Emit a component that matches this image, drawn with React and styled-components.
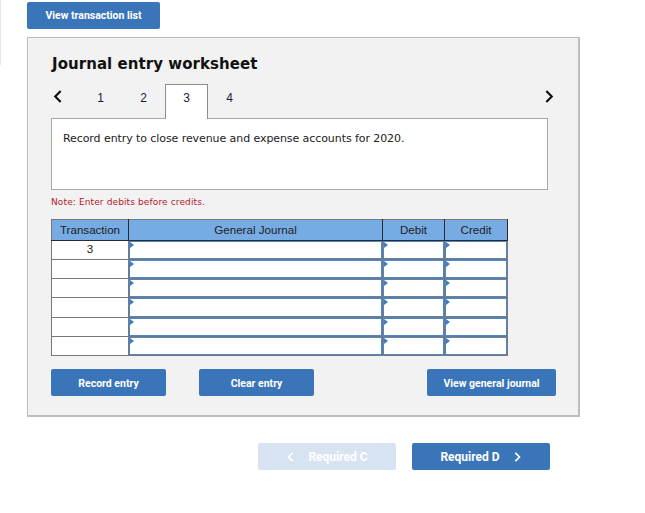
import React from "react";
import styled, { createGlobalStyle } from "styled-components";

const Global = createGlobalStyle`
  html, body { margin: 0; padding: 0; background: #fff; }
  body { font-family: "Liberation Sans", Arial, sans-serif; }
`;
const Page = styled.div`
  position: relative;
  width: 645px;
  height: 513px;
  padding: 2px 0 0 27px;
  box-sizing: border-box;
  overflow: hidden;
`;
const EdgeLine = styled.div`
  position: absolute;
  left: 0;
  top: 0;
  width: 1px;
  height: 65px;
  background: #e6e6e6;
`;
const Button = styled.button`
  display: flex;
  align-items: center;
  justify-content: center;
  gap: ${(p) => p.$gap || 0}px;
  width: ${(p) => p.$w}px;
  height: 27px;
  padding: ${(p) => p.$pt || 0}px 0 0;
  border: 0;
  border-radius: 2px;
  background: ${(p) => (p.$disabled ? "#d7e3f1" : "#3a75b9")};
  color: #fff;
  font-family: Roboto, sans-serif;
  font-weight: 700;
  font-size: ${(p) => p.$fs || 10.5}px;
`;
const Panel = styled.section`
  margin-top: 8px;
  width: 553px;
  height: 380px;
  box-sizing: border-box;
  border: 1px solid #bdbdbd;
  border-width: 1px 2px 2px 1px;
  background: #f2f2f2;
  padding: 16px 31px 0 23px;
`;
const Title = styled.h2`
  margin: 0 0 0 1px;
  font-family: "DejaVu Sans", Verdana, sans-serif;
  font-size: 15px;
  font-weight: 700;
  letter-spacing: 0.05px;
  line-height: 20px;
  color: #111;
`;
const TabRow = styled.div`
  display: flex;
  align-items: flex-end;
  height: 34px;
  margin: 10px -8px 0 0;
  position: relative;
  z-index: 1;
`;
const Arrow = styled.span`
  display: flex;
  flex: none;
  align-items: center;
  width: ${(p) => p.$w}px;
  height: 34px;
  margin-left: ${(p) => (p.$end ? "auto" : "0")};
  padding: 0 0 9px ${(p) => (p.$end ? 0 : 1)}px;
  box-sizing: border-box;
`;
const Tab = styled.div`
  flex: none;
  width: 43px;
  box-sizing: border-box;
  display: flex;
  align-items: center;
  justify-content: center;
  font-size: 12px;
  color: #1a1a40;
  padding-bottom: 8px;
  border: 1px solid ${(p) => (p.$active ? "#8c8c8c" : "transparent")};
  border-bottom: 0;
  background: ${(p) => (p.$active ? "#fff" : "transparent")};
  margin-bottom: ${(p) => (p.$active ? "-1px" : "0")};
  height: ${(p) => (p.$active ? "35px" : "34px")};
`;
const Prompt = styled.div`
  width: 497px;
  height: 72px;
  box-sizing: border-box;
  border: 1px solid #a9a9a9;
  background: #fff;
  padding: 13px 11px;
  font-family: "DejaVu Sans", Verdana, sans-serif;
  font-size: 11px;
  letter-spacing: -0.08px;
  line-height: 14px;
  color: #222;
`;
const Note = styled.p`
  margin: 6px 0 0;
  font-family: "DejaVu Sans", Verdana, sans-serif;
  font-size: 9px;
  letter-spacing: 0.12px;
  line-height: 12px;
  color: #b3202c;
`;
const Sheet = styled.table`
  margin-top: 11px;
  border-collapse: collapse;
  table-layout: fixed;
  width: 457px;
  border: 1px solid #777;
`;
const Head = styled.th`
  box-sizing: border-box;
  height: 21px;
  padding: 0 0 1px;
  background: #77abe4;
  border: 1px solid #2b2b2b;
  border-top: 1px solid #777;
  border-left-color: ${(p) => (p.$first ? "#777" : "#2b2b2b")};
  font-size: 11.6px;
  font-weight: 400;
  color: #222;
  width: ${(p) => p.$w}px;
`;
const Row = styled.tr`
  height: ${(p) => p.$h}px;
`;
const Cell = styled.td`
  padding: 0 0 2px;
  border: 1px solid #777;
  background: #fff;
  text-align: center;
  font-size: 11.6px;
  line-height: 14px;
  color: #222;
`;
const EntryCell = styled.td`
  position: relative;
  padding: 0;
  border: 1px solid #777;
  background: #fff;
  box-shadow: inset 0 0 0 1px #4f86c6;
  &::before {
    content: "";
    position: absolute;
    left: 1px;
    top: 1px;
    border-left: 4px solid #3f7dc1;
    border-top: 3px solid transparent;
    border-bottom: 3px solid transparent;
  }
`;
const Actions = styled.div`
  display: flex;
  gap: 33px;
  margin-top: 13px;
  width: 505px;
`;
const PushRight = styled.div`
  margin-left: auto;
`;
const Pager = styled.nav`
  display: flex;
  gap: 16px;
  margin: 26px 0 0 231px;
`;
const Chevron = ({ dir = "left", size = 12, color = "#111", sw = 2 }) => (
  <svg width={size} height={size} viewBox="0 0 12 12" fill="none" stroke={color} strokeWidth={sw}>
    <path d={dir === "left" ? "M8 1 L3 6 L8 11" : "M4 1 L9 6 L4 11"} />
  </svg>
);

const heights = [19, 19, 19, 20, 19, 19];

export default function App() {
  return (
    <Page>
      <Global />
      <EdgeLine />
      <Button $w={133}>View transaction list</Button>
      <Panel>
        <Title>Journal entry worksheet</Title>
        <TabRow>
          <Arrow $w={28}><Chevron dir="left" size={13} /></Arrow>
          <Tab>1</Tab>
          <Tab>2</Tab>
          <Tab $active>3</Tab>
          <Tab>4</Tab>
          <Arrow $w={13} $end><Chevron dir="right" size={13} /></Arrow>
        </TabRow>
        <Prompt>Record entry to close revenue and expense accounts for 2020.</Prompt>
        <Note>Note: Enter debits before credits.</Note>
        <Sheet>
          <thead>
            <tr>
              <Head $first $w={77}>Transaction</Head>
              <Head $w={254}>General Journal</Head>
              <Head $w={62}>Debit</Head>
              <Head $w={63}>Credit</Head>
            </tr>
          </thead>
          <tbody>
            {heights.map((h, i) => (
              <Row key={i} $h={h}>
                <Cell>{i === 0 ? "3" : ""}</Cell>
                <EntryCell />
                <EntryCell />
                <EntryCell />
              </Row>
            ))}
          </tbody>
        </Sheet>
        <Actions>
          <Button $w={115} $pt={1}>Record entry</Button>
          <Button $w={115} $pt={1}>Clear entry</Button>
          <PushRight><Button $w={129} $pt={1}>View general journal</Button></PushRight>
        </Actions>
      </Panel>
      <Pager>
        <Button $w={138} $disabled $fs={12} $gap={12}>
          <Chevron dir="left" size={10} color="#fff" />
          Required C
        </Button>
        <Button $w={138} $fs={12} $gap={12}>
          Required D
          <Chevron dir="right" size={10} color="#fff" />
        </Button>
      </Pager>
    </Page>
  );
}
